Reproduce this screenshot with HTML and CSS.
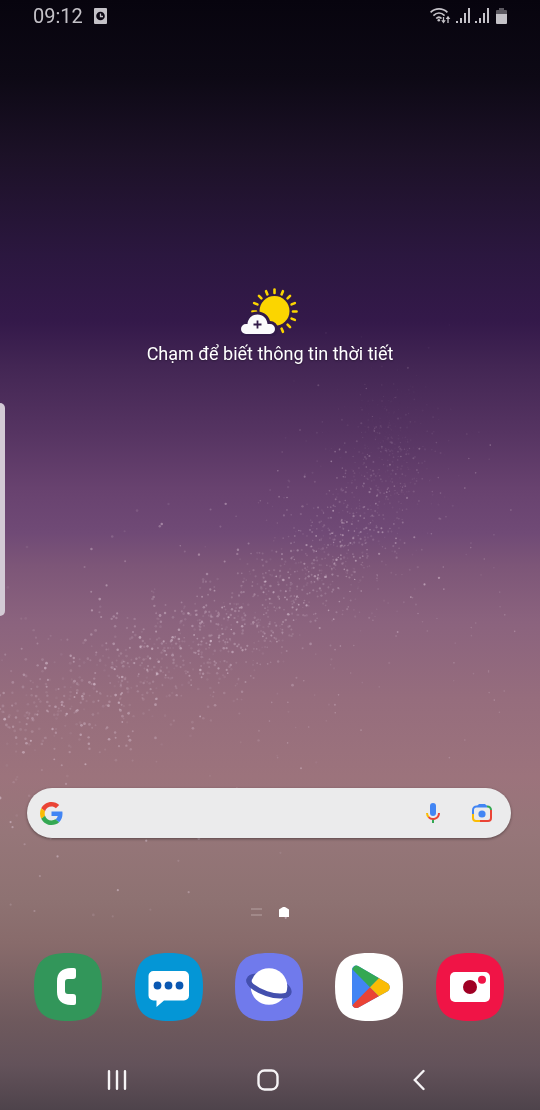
FILE: index.html
```html
<!DOCTYPE html>
<html lang="vi">
<head>
    <meta charset="UTF-8">
    <meta name="viewport" content="width=device-width, initial-scale=1.0">
    <title>Home</title>
    <link rel="stylesheet" href="styles.css">
</head>
<body>

<div class="screen">
    <canvas class="dust" id="dust" aria-hidden="true"></canvas>
    <div class="edge-handle"></div>

    <!-- ===== STATUS BAR ===== -->
    <header class="status-bar">
        <span class="clock">09:12</span>
        <svg width="13" height="17" viewBox="0 0 13 17">
            <rect width="13" height="16" rx="1" fill="#c4c2c8"/>
            <circle cx="6.5" cy="8" r="4.3" fill="#0b0713"/>
            <path d="M6.5 5.5v3H9" fill="none" stroke="#c4c2c8" stroke-width="1.3"/>
        </svg>
        <div class="status-icons">
            <svg width="22" height="18" viewBox="0 0 22 18" fill="none" stroke="#c4c2c8" stroke-width="1.7">
                <path d="M1.6 5.4c4.900-4.700 11.900-4.700 16.800 0M4.400 8.600c3.400-3.200 7.800-3.200 11.200 0M7.200 11.500c1.600-1.500 3.800-1.500 5.400 0"/>
                <circle cx="9.800" cy="13.200" r="1.300" fill="#c4c2c8" stroke="none"/>
                <path d="M14.500 10v4M19 16v-5" stroke-width="1.300"/>
                <path d="M12.200 13.200h4.600l-2.300 3.300zM16.700 12h4.600L19 8.700z" fill="#c4c2c8" stroke="none"/>
            </svg>
            <svg width="14" height="18" viewBox="0 0 14 18" fill="#c4c2c8">
                <path d="M0 14h2v2H0zM4 11h2v5H4zM8 6h2v10H8zM12 1h2v15h-2z"/>
            </svg>
            <svg width="14" height="18" viewBox="0 0 14 18" fill="#c4c2c8">
                <path d="M0 14h2v2H0zM4 11h2v5H4zM8 6h2v10H8zM12 1h2v15h-2z"/>
            </svg>
            <svg class="battery" width="11" height="18" viewBox="0 0 11 18">
                <path d="M3 1h5v2h2a1 1 0 0 1 1 1v3H0V4a1 1 0 0 1 1-1h2z" fill="#5c5961"/>
                <path d="M0 7h11v9a1 1 0 0 1-1 1H1a1 1 0 0 1-1-1z" fill="#c4c2c8"/>
            </svg>
        </div>
    </header>

    <!-- ===== WEATHER WIDGET ===== -->
    <main class="weather">
        <button class="weather-button">
            <svg width="58" height="48" viewBox="0 0 58 48">
                <g stroke="#fbd500" stroke-width="2.6" stroke-linecap="round">
                    <path d="M33.500 1.500v3.500"/>
                    <path d="M33.500 1.500v3.500" transform="rotate(22.5 33.5 23.5)"/>
                    <path d="M33.500 1.500v3.500" transform="rotate(45 33.5 23.5)"/>
                    <path d="M33.500 1.500v3.500" transform="rotate(67.5 33.5 23.5)"/>
                    <path d="M33.500 1.500v3.500" transform="rotate(90 33.5 23.5)"/>
                    <path d="M33.500 1.500v3.500" transform="rotate(112.5 33.5 23.5)"/>
                    <path d="M33.500 1.500v3.500" transform="rotate(135 33.5 23.5)"/>
                    <path d="M33.500 1.500v3.500" transform="rotate(157.5 33.5 23.5)"/>
                    <path d="M33.500 1.500v3.500" transform="rotate(-22.5 33.5 23.5)"/>
                    <path d="M33.500 1.500v3.500" transform="rotate(-45 33.5 23.5)"/>
                    <path d="M33.500 1.500v3.500" transform="rotate(-67.5 33.5 23.5)"/>
                    <path d="M33.500 1.500v3.500" transform="rotate(-90 33.5 23.5)"/>
                </g>
                <circle cx="33.500" cy="23" r="15" fill="#fbd500"/>
                <path d="M5 46a5 5 0 0 1 0-10h1.500C7 30.500 11 26.500 16.500 26.500s9.500 4 10 9.500H29a5 5 0 0 1 0 10z" fill="#fafafc" stroke="#321a49" stroke-width="6" paint-order="stroke"/>
                <path d="M16.500 32.500v8M12.500 36.500h8" stroke="#321a49" stroke-width="1.800"/>
            </svg>
            <span>Chạm để biết thông tin thời tiết</span>
        </button>
    </main>

    <!-- ===== SEARCH ===== -->
    <form class="search" role="search">
        <svg width="23" height="23" viewBox="0 0 48 48">
            <path fill="#EA4335" d="M24 9.500c3.540 0 6.710 1.220 9.210 3.600l6.850-6.850C35.900 2.380 30.470 0 24 0 14.620 0 6.510 5.380 2.560 13.220l7.980 6.190C12.430 13.720 17.740 9.500 24 9.500z"/>
            <path fill="#4285F4" d="M46.980 24.550c0-1.570-.15-3.090-.38-4.550H24v9.020h12.940c-.58 2.960-2.260 5.480-4.780 7.180l7.730 6c4.510-4.180 7.090-10.360 7.090-17.650z"/>
            <path fill="#FBBC05" d="M10.530 28.590c-.48-1.450-.76-2.990-.76-4.590s.27-3.140.76-4.590l-7.980-6.190C.92 16.460 0 20.120 0 24c0 3.880.92 7.540 2.560 10.780l7.970-6.190z"/>
            <path fill="#34A853" d="M24 48c6.480 0 11.930-2.130 15.890-5.810l-7.730-6c-2.150 1.450-4.920 2.300-8.160 2.300-6.260 0-11.570-4.220-13.470-9.910l-7.980 6.190C6.510 42.620 14.620 48 24 48z"/>
        </svg>
        <input type="text" aria-label="Google">
        <button type="button" aria-label="Voice search">
            <svg width="16" height="22" viewBox="0 0 16 22" fill="none" stroke-width="2">
                <rect x="5" y="1" width="6" height="13" rx="3" fill="#4285f4"/>
                <path d="M2 11a6 6 0 0 0 1.800 4.300" stroke="#fbbc04"/>
                <path d="M3.600 15.100A6 6 0 0 0 14 11" stroke="#ea4335"/>
                <path d="M8 17.800V21" stroke="#34a853"/>
            </svg>
        </button>
        <button type="button" aria-label="Google Lens">
            <svg width="22" height="20" viewBox="0 0 22 20" fill="none" stroke-width="2">
                <path d="M2 11V7a3.500 3.500 0 0 1 3.500-3.500H16" stroke="#4285f4"/>
                <path d="M5.500 3.500L8 1h6l2.500 2.500z" fill="#4285f4"/>
                <path d="M16 3.500h.5A3.500 3.500 0 0 1 20 7" stroke="#34a853"/>
                <path d="M20 7v8a3 3 0 0 1-3 3H9" stroke="#ea4335"/>
                <path d="M9 18H5a3 3 0 0 1-3-3v-4" stroke="#fbbc04"/>
                <circle cx="11" cy="11" r="3.600" fill="#4285f4"/>
            </svg>
        </button>
    </form>

    <!-- ===== PAGE INDICATOR ===== -->
    <div class="pager">
        <svg width="11" height="10" viewBox="0 0 11 10">
            <path d="M0 2h11M0 8h11" stroke="#b5a2a2" stroke-width="1.200"/>
        </svg>
        <svg width="10" height="10" viewBox="0 0 10 10">
            <path d="M0 2.600L4 0h2l4 2.600V10H0z" fill="#fff"/>
        </svg>
    </div>

    <!-- ===== DOCK ===== -->
    <div class="dock">
        <button aria-label="Phone">
            <svg width="68" height="68" viewBox="0 0 68 68">
                <path d="M34 0C59 0 68 9 68 34S59 68 34 68 0 59 0 34 9 0 34 0z" fill="#32965a"/>
                <path d="M40 15h-3c-9 0-14 5-14 13v11c0 8 5 13 14 13h3a2 2 0 0 0 2-2v-6c0-2-1-3-3-3h-5c-2 0-3-1-3-3v-9c0-2 1-3 3-3h5c2 0 3-1 3-3v-6a2 2 0 0 0-2-2z" fill="#fff"/>
            </svg>
        </button>
        <button aria-label="Messages">
            <svg width="68" height="68" viewBox="0 0 68 68">
                <path d="M34 0C59 0 68 9 68 34S59 68 34 68 0 59 0 34 9 0 34 0z" fill="#0496d6"/>
                <path d="M18.500 18h30.500a5 5 0 0 1 5 5v19.500a5 5 0 0 1-5 5H29L21.500 54v-6.500h-3a5 5 0 0 1-5-5V23a5 5 0 0 1 5-5z" fill="#fff"/>
                <g fill="#0a58b2">
                    <circle cx="22.500" cy="32.500" r="3.900"/>
                    <circle cx="33.500" cy="32.500" r="3.900"/>
                    <circle cx="44.500" cy="32.500" r="3.900"/>
                </g>
            </svg>
        </button>
        <button aria-label="Internet">
            <svg width="68" height="68" viewBox="0 0 68 68">
                <path d="M34 0C59 0 68 9 68 34S59 68 34 68 0 59 0 34 9 0 34 0z" fill="#707aec"/>
                <g fill="none" stroke="#4450ae" stroke-width="5">
                    <ellipse cx="34" cy="33" rx="21" ry="8" transform="rotate(18 34 33)"/>
                    <circle cx="34" cy="33.500" r="18.300" fill="#fff" stroke="none"/>
                    <path d="M13 33a21 8 0 0 0 42 0" transform="rotate(18 34 33)"/>
                </g>
            </svg>
        </button>
        <button aria-label="Play Store">
            <svg width="68" height="68" viewBox="0 0 68 68">
                <clipPath id="play">
                    <path d="M17 17c0-3.500 3.500-5.500 6.500-3.800L52.300 30c3.300 2 3.300 6.500 0 8.500L23.500 54.500c-3 1.700-6.500-.3-6.500-3.800z"/>
                </clipPath>
                <path d="M34 0C59 0 68 9 68 34S59 68 34 68 0 59 0 34 9 0 34 0z" fill="#fff"/>
                <g clip-path="url(#play)">
                    <path d="M10 10h50v50H10z" fill="#4285f4"/>
                    <path d="M17 16l18 18.200 12-12L24 8z" fill="#34a853"/>
                    <path d="M17 52.500l18-18.300 12 12L24 60z" fill="#ea4335"/>
                    <path d="M35 34.200L47 22l13 12-13 12.200z" fill="#fbbc04"/>
                </g>
            </svg>
        </button>
        <button aria-label="Camera">
            <svg width="68" height="68" viewBox="0 0 68 68">
                <path d="M34 0C59 0 68 9 68 34S59 68 34 68 0 59 0 34 9 0 34 0z" fill="#f01446"/>
                <rect x="14" y="19" width="40" height="30" rx="5" fill="#fff"/>
                <circle cx="34" cy="34" r="7" fill="#a00024"/>
                <circle cx="46" cy="26.800" r="4" fill="#f01446"/>
            </svg>
        </button>
    </div>

    <!-- ===== NAVIGATION BAR ===== -->
    <nav class="nav-bar">
        <button aria-label="Recents">
            <svg width="20" height="22" viewBox="0 0 20 22" fill="none" stroke="#f6f4f6" stroke-width="2.400" stroke-linecap="round">
                <path d="M2 2.200v17.600M10 2.200v17.600M18 2.200v17.600"/>
            </svg>
        </button>
        <button aria-label="Home">
            <svg width="22" height="22" viewBox="0 0 22 22" fill="none" stroke="#f6f4f6" stroke-width="2.400">
                <rect x="1.500" y="1.500" width="19" height="19" rx="6"/>
            </svg>
        </button>
        <button aria-label="Back">
            <svg width="12" height="22" viewBox="0 0 12 22" fill="none" stroke="#f6f4f6" stroke-width="2.400" stroke-linecap="round">
                <path d="M10.500 2L1.800 11l8.700 9"/>
            </svg>
        </button>
    </nav>
</div>

<script src="dust.js"></script>
</body>
</html>
```
FILE: styles.css
```css
:root {
    --status: #c4c2c8;
    --font-family: Roboto, "Noto Sans", sans-serif;
}
* {
    box-sizing: border-box;
}
body {
    margin: 0;
    font-family: var(--font-family);
    color: #fff;
}
button {
    display: flex;
    align-items: center;
    justify-content: center;
    padding: 0;
    border: none;
    background: none;
    color: inherit;
    font-family: inherit;
    cursor: pointer;
}
svg {
    display: block;
    flex-shrink: 0;
}
.screen {
    position: relative;
    display: flex;
    flex-direction: column;
    min-height: 100vh;
    overflow: hidden;
    isolation: isolate;
    background: linear-gradient(
        #07040e 0%,
        #0d0915 7%,
        #1c1127 14%,
        #2b173f 23%,
        #34194a 29%,
        #432654 33%,
        #563462 39%,
        #68426f 44%,
        #704a76 48%,
        #7d5678 51%,
        #8b637e 56%,
        #966d7d 63%,
        #9c737c 70%,
        #967679 75%,
        #8e7272 81%,
        #886b6b 85%,
        #6e595d 92%,
        #63525a 96%,
        #4e434b 100%
    );
}
.dust {
    position: absolute;
    inset: 0;
    z-index: -1;
    width: 100%;
    height: 100%;
}

/* Edge panel handle on the left side */
.edge-handle {
    position: absolute;
    top: 403px;
    left: 0;
    width: 5px;
    height: 213px;
    border-radius: 0 6px 6px 0;
    background: #d3cad5;
}

.status-bar {
    display: flex;
    align-items: center;
    height: 32px;
    padding: 0 33px;
    gap: 11px;
    color: var(--status);
}
.clock {
    font-size: 20px;
    line-height: 32px;
}
.status-icons {
    display: flex;
    align-items: center;
    gap: 5px;
    margin-left: auto;
}
.battery {
    margin-left: 2px;
}

.weather {
    display: flex;
    flex: 1;
    align-items: flex-start;
    justify-content: center;
    padding-top: 256px;
}
.weather-button {
    flex-direction: column;
    gap: 6px;
    font-size: 18px;
    line-height: 24px;
    text-shadow: 0 1px 2px rgba(0, 0, 0, 0.3);
}

.search {
    display: flex;
    align-items: center;
    height: 50px;
    margin: 0 29px 0 27px;
    padding: 0 18px 0 13px;
    border-radius: 25px;
    background: #ebebec;
    box-shadow: 0 1px 3px rgba(0, 0, 0, 0.4);
}
.search input {
    flex: 1;
    min-width: 0;
    height: 100%;
    border: none;
    outline: none;
    background: none;
    font-family: inherit;
    font-size: 18px;
}
.search button + button {
    margin-left: 30px;
}

.pager {
    display: flex;
    align-items: center;
    justify-content: center;
    gap: 17px;
    padding: 69px 0 36px;
}

.dock {
    display: grid;
    grid-template-columns: repeat(5, 1fr);
    padding: 0 20px 28px 18px;
}

.nav-bar {
    display: grid;
    grid-template-columns: repeat(3, 1fr);
    height: 61px;
    padding: 0 46px 0 41px;
}
```
FILE: dust.js
```js
// Star dust on the wallpaper, drawn in a 540 x 1110 space
const canvas = document.getElementById('dust');

// Centre line of the band: x, y, spread
const band = [
    [-20, 730, 52],
    [110, 685, 50],
    [200, 645, 48],
    [280, 600, 44],
    [345, 545, 42],
    [385, 485, 38],
    [390, 395, 30],
];

let seed = 7;
function random() {
    seed = (seed * 1664525 + 1013904223) % 4294967296;
    return seed / 4294967296;
}

function gauss() {
    return random() + random() + random() + random() - 2;
}

function speck(ctx, x, y, r, alpha) {
    ctx.fillStyle = `rgba(222, 200, 216, ${alpha})`;
    ctx.beginPath();
    ctx.arc(x, y, r, 0, Math.PI * 2);
    ctx.fill();
}

function drawDust() {
    seed = 7;
    canvas.width = canvas.clientWidth;
    canvas.height = canvas.clientHeight;
    const ctx = canvas.getContext('2d');
    ctx.scale(canvas.width / 540, canvas.height / 1110);

    for (let i = 0; i < 1900; i++) {
        const t = random() * (band.length - 1);
        const n = Math.floor(t);
        const f = t - n;
        const [x1, y1, s1] = band[n];
        const [x2, y2, s2] = band[n + 1];
        const spread = (s1 + (s2 - s1) * f) * (random() < 0.3 ? 2.2 : 1);
        const x = x1 + (x2 - x1) * f + gauss() * spread;
        const y = y1 + (y2 - y1) * f + gauss() * spread;
        const near = 1 - t / (band.length - 1);
        const alpha = 0.08 + random() * random() * 0.6;
        speck(ctx, x, y, 0.5 + near * 0.5 + random() * 0.5, alpha * Math.min(1, near * 2.5 + 0.1));
    }

    // Loose specks around the band
    for (let i = 0; i < 90; i++) {
        speck(ctx, 250 + random() * 270, 430 + random() * 330, 0.8, 0.1 + random() * 0.25);
    }
    for (let i = 0; i < 24; i++) {
        speck(ctx, random() * 290, 780 + random() * 170, 1.1, 0.1 + random() * 0.45);
    }
}

drawDust();
window.addEventListener('resize', drawDust);
```
